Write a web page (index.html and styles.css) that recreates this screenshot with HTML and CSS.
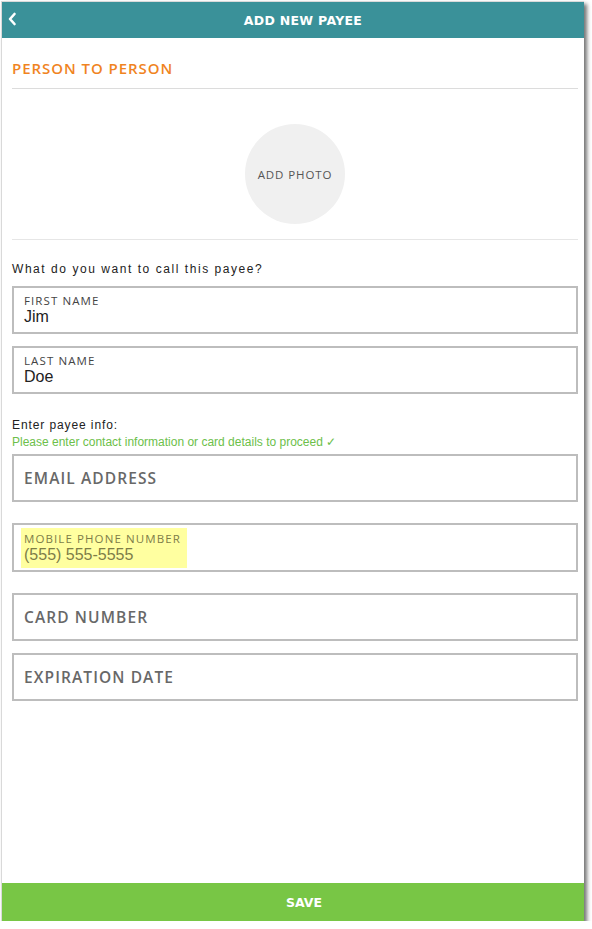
FILE: index.html
```html
<!DOCTYPE html>
<html>
<head>
<meta charset="utf-8">
<link rel="stylesheet" href="styles.css">
</head>
<body>
<div class="panel">
  <header class="topbar">
    <span class="back">
      <svg width="10" height="14" viewBox="0 0 10 14"><path d="M7.5 2 L3 7 L7.5 12" fill="none" stroke="#fff" stroke-width="2.6" stroke-linecap="round" stroke-linejoin="round"/></svg>
    </span>
    <span class="title">ADD NEW PAYEE</span>
  </header>
  <main class="content">
    <h2 class="section">PERSON TO PERSON</h2>
    <div class="photo-row">
      <div class="photo">ADD PHOTO</div>
    </div>
    <p class="prompt">What do you want to call this payee?</p>
    <div class="field">
      <span class="label">FIRST NAME</span>
      <span class="value">Jim</span>
    </div>
    <div class="field gap-s">
      <span class="label">LAST NAME</span>
      <span class="value">Doe</span>
    </div>
    <p class="prompt prompt2">Enter payee info:</p>
    <p class="hint">Please enter contact information or card details to proceed ✓</p>
    <div class="field empty gap-xs"><span class="placeholder">EMAIL ADDRESS</span></div>
    <div class="field mobile">
      <div class="highlight">
        <span class="label hl">MOBILE PHONE NUMBER</span>
        <span class="value hl">(555) 555-5555</span>
      </div>
    </div>
    <div class="field empty gap-l"><span class="placeholder">CARD NUMBER</span></div>
    <div class="field empty gap-s"><span class="placeholder">EXPIRATION DATE</span></div>
  </main>
  <footer class="save">SAVE</footer>
</div>
</body>
</html>
```
FILE: styles.css
```css
html, body {
  margin: 0;
  padding: 0;
  background: #fff;
}
body {
  padding: 1px 0 0 1px;
}
.panel {
  width: 582px;
  height: 919px;
  border-left: 1px solid #d9d9d9;
  border-top: 1px solid #d9d9d9;
  display: flex;
  flex-direction: column;
  background: #fff;
  box-shadow: 3px 3px 4px rgba(0,0,0,0.55);
}
.topbar {
  height: 36px;
  background: #3a9199;
  display: flex;
  align-items: center;
  justify-content: center;
  position: relative;
  flex-shrink: 0;
}
.back {
  position: absolute;
  left: 5px;
  top: 10px;
  display: flex;
}
.title {
  color: #fff;
  font-family: "DejaVu Sans", sans-serif;
  font-weight: bold;
  font-size: 12.5px;
  letter-spacing: 0.3px;
  margin-left: 20px;
}
.content {
  flex: 1;
  padding: 0 6px 0 10px;
  display: flex;
  flex-direction: column;
}
.section {
  margin: 21px 0 0;
  padding-bottom: 11px;
  border-bottom: 1px solid #dcdcdc;
  color: #f0841f;
  font-family: "Open Sans", sans-serif;
  font-weight: 600;
  font-size: 15px;
  line-height: 18px;
  letter-spacing: 0.95px;
}
.photo-row {
  display: flex;
  justify-content: center;
  padding: 35px 0 15px;
  border-bottom: 1px solid #e6e6e6;
}
.photo {
  width: 100px;
  height: 100px;
  border-radius: 50%;
  background: #f0f0f0;
  display: flex;
  align-items: center;
  justify-content: center;
  color: #555;
  font-family: "Open Sans", sans-serif;
  font-weight: 500;
  font-size: 11.5px;
  letter-spacing: 0.9px;
}
.prompt {
  margin: 22px 0 0;
  font-family: "Liberation Sans", Arial, sans-serif;
  font-size: 12px;
  line-height: 14px;
  letter-spacing: 1.55px;
  color: #222;
}
.prompt2 {
  margin-top: 24px;
  letter-spacing: 0.9px;
}
.hint {
  margin: 3px 0 0;
  font-family: "Liberation Sans", Arial, sans-serif;
  font-size: 12px;
  line-height: 14px;
  color: #6cc04a;
}
.field {
  box-sizing: border-box;
  height: 48px;
  border: 2px solid #bdbdbd;
  padding: 0 10px;
  display: flex;
  flex-direction: column;
  justify-content: center;
  margin-top: 10px;
}
.gap-xs { margin-top: 5px; }
.gap-s { margin-top: 12px; }
.gap-l { margin-top: 21px; }
.mobile {
  margin-top: 21px;
  height: 49px;
  padding: 0 7px;
}
.label {
  font-family: "Open Sans", sans-serif;
  font-weight: 500;
  font-size: 11.5px;
  line-height: 14px;
  letter-spacing: 1.1px;
  color: #444;
}
.value {
  font-family: "Liberation Sans", Arial, sans-serif;
  font-size: 16px;
  line-height: 18px;
  color: #222;
}
.placeholder {
  font-family: "Open Sans", sans-serif;
  font-weight: 600;
  font-size: 15.5px;
  color: #686868;
  letter-spacing: 1.1px;
}
.highlight {
  align-self: flex-start;
  background: #ffffa0;
  padding: 4px 6px 4px 3px;
  display: flex;
  flex-direction: column;
}
.label.hl, .value.hl {
  color: #7d7d48;
}
.save {
  height: 38px;
  flex-shrink: 0;
  background: #78c645;
  color: #fff;
  display: flex;
  align-items: center;
  justify-content: center;
  font-family: "DejaVu Sans", sans-serif;
  font-weight: bold;
  font-size: 12.5px;
  padding-left: 22px;
}
```
